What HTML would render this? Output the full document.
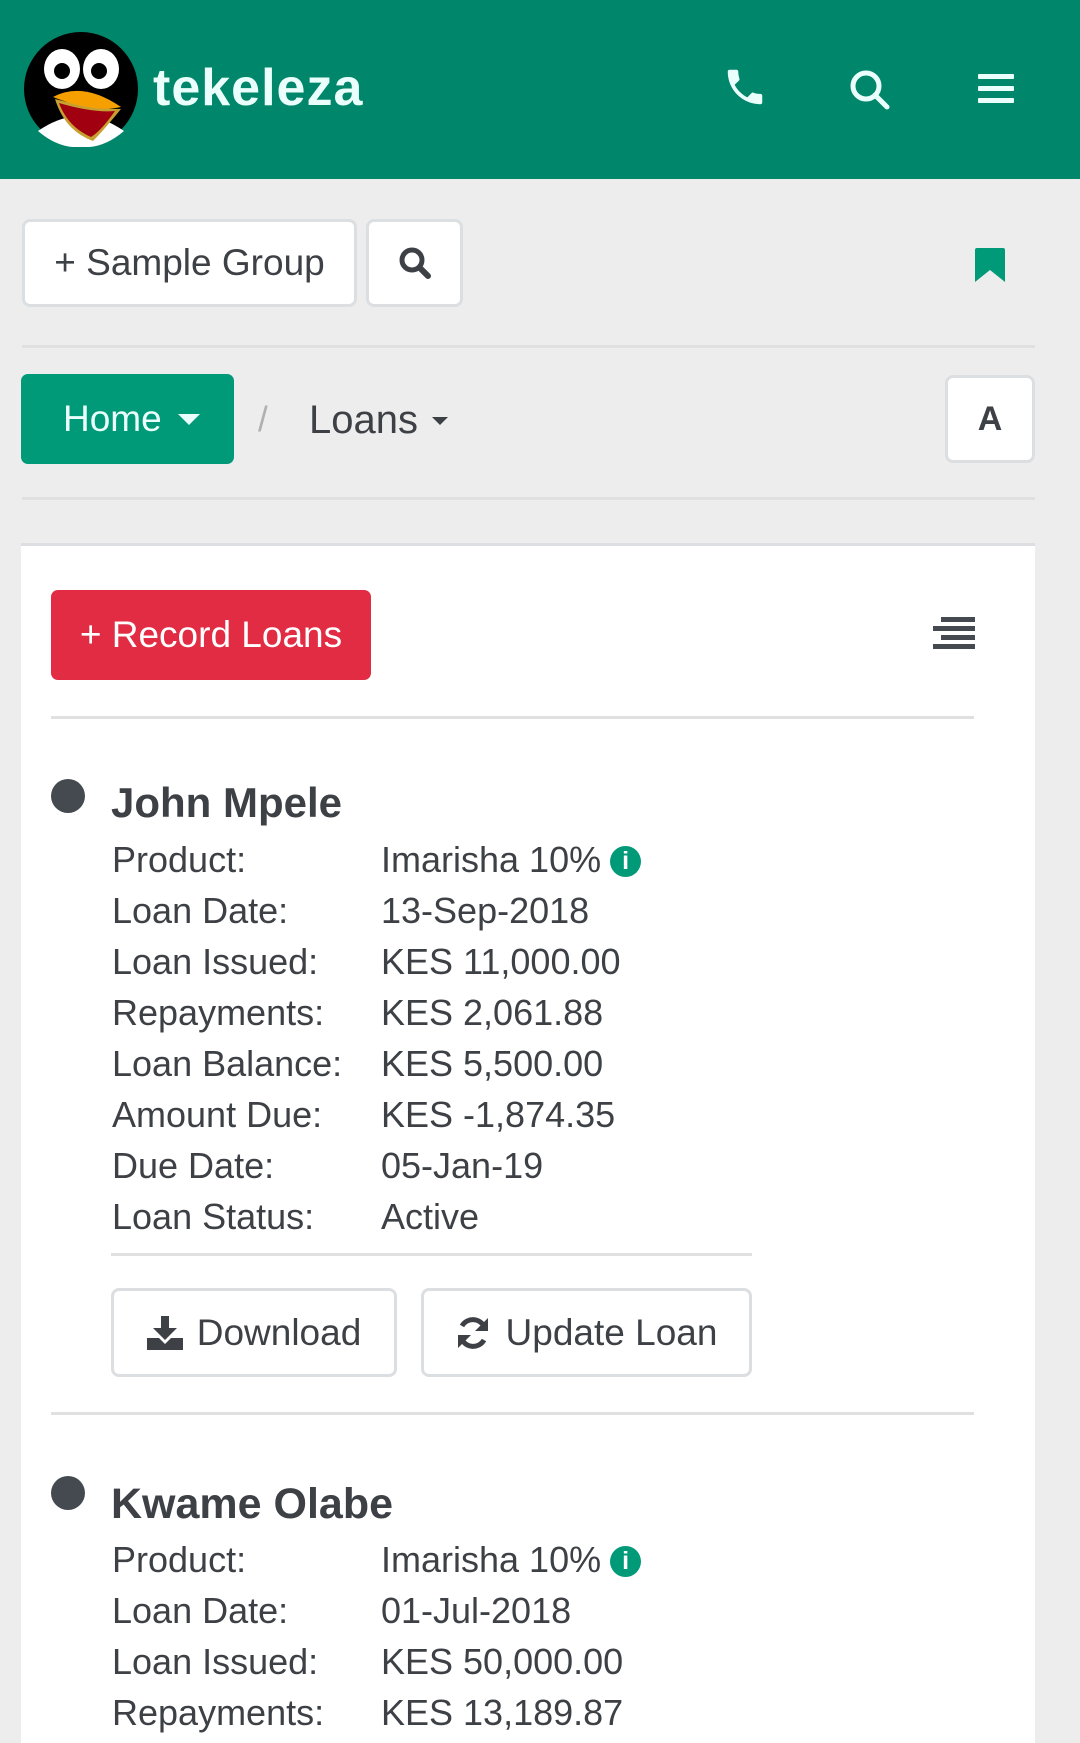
<!DOCTYPE html>
<html><head><meta charset="utf-8"><style>
*{margin:0;padding:0;box-sizing:border-box}
body{width:1080px;height:1733px;background:#ededed;font-family:"Liberation Sans",sans-serif;color:#3d4146;position:relative;overflow:hidden}
.a{position:absolute}
.hdr{left:0;top:0;width:1080px;height:179px;background:#00866a}
.btn{position:absolute;background:#fff;border:3px solid #dcdfe2;border-radius:8px;display:flex;align-items:center;justify-content:center;font-size:36px;color:#3d4146}
.hr{position:absolute;height:3px;background:#e0e0e0}
.row{position:absolute;left:112px;font-size:36px;color:#3d4146;line-height:51px;white-space:nowrap}
.row span{position:absolute;left:269px}
.dot{position:absolute;width:34px;height:34px;border-radius:50%;background:#444a50}
.name{position:absolute;left:111px;font-size:42px;font-weight:bold;color:#3d4146}
.info{display:inline-block;width:31px;height:31px;border-radius:50%;background:#009a78;color:#fff;font-size:25px;font-weight:bold;text-align:center;line-height:31px;vertical-align:3px;margin-left:9px;font-family:"Liberation Sans",sans-serif;font-style:normal}
</style></head><body>
<div class="a hdr"></div>
<svg class="a" style="left:23px;top:31px" width="116" height="116" viewBox="0 0 116 116">
<circle cx="58" cy="58" r="57" fill="#000"/>
<path d="M15 100 Q58 70 101 100 Q80 118 58 116 Q36 118 15 100Z" fill="#fff"/>
<ellipse cx="39" cy="38" rx="18" ry="20" fill="#fff"/><ellipse cx="78" cy="38" rx="18" ry="20" fill="#fff"/>
<circle cx="39" cy="40" r="8" fill="#000"/><circle cx="76" cy="40" r="8" fill="#000"/>
<path d="M32 68 Q70 78 98 78 Q80 100 70 110 Q42 100 32 68Z" fill="#c8a030"/>
<path d="M36 72 Q70 82 92 80 Q78 100 68 106 Q45 96 36 72Z" fill="#a00010"/>
<path d="M30 66 Q60 50 98 76 Q70 82 30 66Z" fill="#f5a000"/>
</svg>
<div class="a" style="left:153px;top:58px;font-size:52px;font-weight:bold;color:#eafffb;letter-spacing:1px">tekeleza</div>
<svg class="a" style="left:722px;top:64px" width="46" height="46" viewBox="0 0 24 24"><path d="M6.6 10.8c1.4 2.8 3.8 5.1 6.6 6.6l2.2-2.2c.3-.3.7-.4 1-.2 1.1.4 2.3.6 3.6.6.6 0 1 .4 1 1V20c0 .6-.4 1-1 1C10.6 21 3 13.4 3 4c0-.6.4-1 1-1h3.5c.6 0 1 .4 1 1 0 1.3.2 2.5.6 3.6.1.3 0 .7-.2 1z" fill="#eafffb"/></svg>
<svg class="a" style="left:848px;top:68px" width="44" height="44" viewBox="0 0 44 44"><circle cx="18" cy="18" r="13" fill="none" stroke="#eafffb" stroke-width="5"/><line x1="27" y1="27" x2="39" y2="39" stroke="#eafffb" stroke-width="5" stroke-linecap="round"/></svg>
<svg class="a" style="left:978px;top:73px" width="36" height="32"><rect y="1" width="36" height="5" rx="1" fill="#eafffb"/><rect y="13" width="36" height="5" rx="1" fill="#eafffb"/><rect y="25" width="36" height="5" rx="1" fill="#eafffb"/></svg>

<div class="btn" style="left:22px;top:219px;width:335px;height:88px;font-size:37px">+ Sample Group</div>
<div class="btn" style="left:366px;top:219px;width:97px;height:88px"><svg width="36" height="36" viewBox="0 0 36 36"><circle cx="15" cy="15" r="10" fill="none" stroke="#3d4146" stroke-width="5"/><line x1="23" y1="23" x2="31" y2="31" stroke="#3d4146" stroke-width="6" stroke-linecap="round"/></svg></div>
<svg class="a" style="left:975px;top:248px" width="30" height="36"><path d="M2 0h26a2 2 0 0 1 2 2v32l-15-12-15 12V2a2 2 0 0 1 2-2z" fill="#009a78"/></svg>
<div class="hr" style="left:22px;top:345px;width:1013px"></div>

<div class="a" style="left:21px;top:374px;width:213px;height:90px;background:#009a78;border-radius:7px;color:#eafffb;font-size:37px;display:flex;align-items:center;padding-left:42px">Home<span style="display:inline-block;margin-left:16px;border-left:11px solid transparent;border-right:11px solid transparent;border-top:11px solid #eafffb"></span></div>
<div class="a" style="left:258px;top:400px;font-size:35px;color:#b0b0b0">/</div>
<div class="a" style="left:309px;top:398px;font-size:40px;color:#3d4146">Loans<span style="display:inline-block;margin-left:14px;vertical-align:8px;border-left:8px solid transparent;border-right:8px solid transparent;border-top:8px solid #3d4146"></span></div>
<div class="btn" style="left:945px;top:375px;width:90px;height:88px;font-weight:bold;font-size:34px">A</div>
<div class="hr" style="left:22px;top:497px;width:1013px"></div>

<div class="a" style="left:21px;top:543px;width:1014px;height:1200px;background:#fff;border-top:3px solid #dddfe2"></div>
<div class="a" style="left:51px;top:590px;width:320px;height:90px;background:#e22c43;border-radius:7px;color:#fff;font-size:37px;display:flex;align-items:center;justify-content:center">+ Record Loans</div>
<svg class="a" style="left:933px;top:616px" width="42" height="36"><rect x="8" y="1" width="34" height="5" fill="#444a50"/><rect x="0" y="10" width="42" height="5" fill="#444a50"/><rect x="8" y="19" width="34" height="5" fill="#444a50"/><rect x="0" y="28" width="42" height="5" fill="#444a50"/></svg>
<div class="hr" style="left:51px;top:716px;width:923px"></div>

<div class="dot" style="left:51px;top:779px"></div>
<div class="name" style="top:779px">John Mpele</div>
<div class="row" style="top:834px">Product:<span>Imarisha 10%<span class="info" style="position:static">i</span></span></div>
<div class="row" style="top:885px">Loan Date:<span>13-Sep-2018</span></div>
<div class="row" style="top:936px">Loan Issued:<span>KES 11,000.00</span></div>
<div class="row" style="top:987px">Repayments:<span>KES 2,061.88</span></div>
<div class="row" style="top:1038px">Loan Balance:<span>KES 5,500.00</span></div>
<div class="row" style="top:1089px">Amount Due:<span>KES -1,874.35</span></div>
<div class="row" style="top:1140px">Due Date:<span>05-Jan-19</span></div>
<div class="row" style="top:1191px">Loan Status:<span>Active</span></div>
<div class="hr" style="left:111px;top:1253px;width:641px"></div>
<div class="btn" style="left:111px;top:1288px;width:286px;height:89px;font-size:37px"><svg width="36" height="34" viewBox="0 0 36 34" style="margin-right:14px"><rect x="14" y="0" width="8" height="14" fill="#3d4146"/><path d="M6 12h24L18 24z" fill="#3d4146"/><path d="M0 22h12l6 6 6-6h12v12H0z" fill="#3d4146"/></svg>Download</div>
<div class="btn" style="left:421px;top:1288px;width:331px;height:89px;font-size:37px"><svg width="34" height="34" viewBox="0 0 34 34" style="margin-right:16px"><path d="M29 13A12.5 12.5 0 0 0 6 10" fill="none" stroke="#3d4146" stroke-width="5"/><path d="M5 21A12.5 12.5 0 0 0 28 24" fill="none" stroke="#3d4146" stroke-width="5"/><path d="M32 2v13H19z" fill="#3d4146"/><path d="M2 32V19h13z" fill="#3d4146"/></svg>Update Loan</div>
<div class="hr" style="left:51px;top:1412px;width:923px"></div>

<div class="dot" style="left:51px;top:1476px"></div>
<div class="name" style="top:1480px;font-size:43px">Kwame Olabe</div>
<div class="row" style="top:1534px">Product:<span>Imarisha 10%<span class="info" style="position:static">i</span></span></div>
<div class="row" style="top:1585px">Loan Date:<span>01-Jul-2018</span></div>
<div class="row" style="top:1636px">Loan Issued:<span>KES 50,000.00</span></div>
<div class="row" style="top:1687px">Repayments:<span>KES 13,189.87</span></div>
</body></html>
